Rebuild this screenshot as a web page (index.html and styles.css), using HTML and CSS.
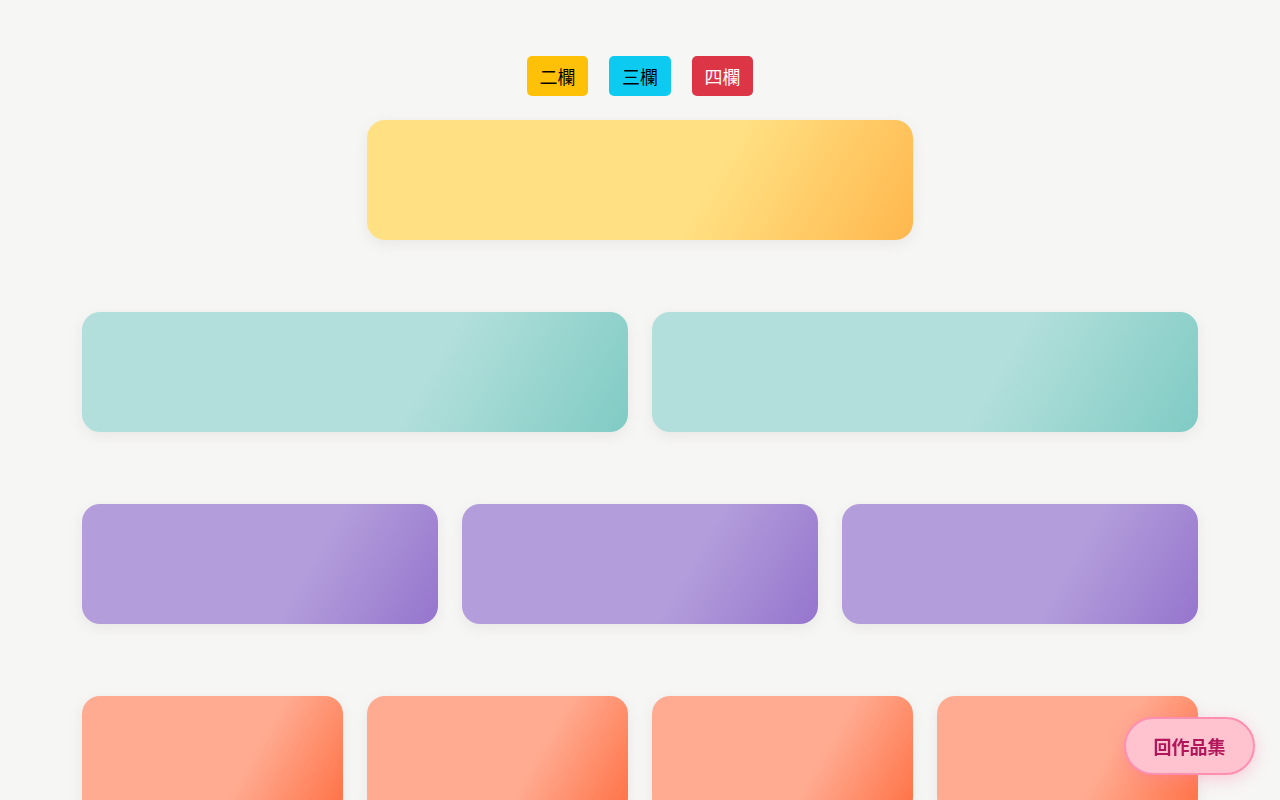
FILE: index.html
```html
<!DOCTYPE html>
<html lang="zh-Hant">
<head>
<meta charset="utf-8">
<title>欄位</title>
<link rel="stylesheet" href="styles.css">
</head>
<body>
<nav class="switcher">
  <button class="btn btn-warning">二欄</button>
  <button class="btn btn-info">三欄</button>
  <button class="btn btn-danger">四欄</button>
</nav>
<main class="wrap">
  <section class="row row-1">
    <div class="card yellow"></div>
  </section>
  <section class="row row-2">
    <div class="card teal"></div>
    <div class="card teal"></div>
  </section>
  <section class="row row-3">
    <div class="card purple"></div>
    <div class="card purple"></div>
    <div class="card purple"></div>
  </section>
  <section class="row row-4">
    <div class="card orange"></div>
    <div class="card orange"></div>
    <div class="card orange"></div>
    <div class="card orange"></div>
  </section>
</main>
<a class="back" href="#">回作品集</a>
</body>
</html>
```
FILE: styles.css
```css
* { box-sizing: border-box; }
html, body { margin: 0; }
body {
  background: #f6f6f5;
  font-family: "Noto Sans CJK TC", "Noto Sans", sans-serif;
  min-height: 100vh;
}
.switcher {
  display: flex;
  justify-content: center;
  gap: 21px;
  padding-top: 56px;
}
.btn {
  font-family: "Noto Sans CJK TC", sans-serif;
  font-size: 18px;
  line-height: 40px;
  height: 40px;
  width: 61px;
  padding: 0;
  text-align: center;
  border: 0;
  border-radius: 5px;
}
.btn-info { width: 62px; }
.btn-warning { background: #ffc107; color: #000; }
.btn-info { background: #0dcaf0; color: #000; }
.btn-danger { background: #dc3545; color: #fff; }
.wrap {
  width: 1116px;
  margin: 24px auto 0;
  display: flex;
  flex-direction: column;
  gap: 72px;
}
.row {
  display: grid;
  gap: 24px;
}
.row-1 { grid-template-columns: 546px; justify-content: center; }
.row-2 { grid-template-columns: repeat(2, 1fr); }
.row-3 { grid-template-columns: repeat(3, 1fr); }
.row-4 { grid-template-columns: repeat(4, 1fr); }
.card {
  height: 120px;
  border-radius: 18px;
  box-shadow: 0 4px 14px rgba(120, 110, 90, 0.10);
}
.yellow { background: linear-gradient(120deg, #ffe082 0%, #ffe082 62%, #ffb74d 100%); }
.teal { background: linear-gradient(120deg, #b2dfdb 0%, #b2dfdb 62%, #80cbc4 100%); }
.purple { background: linear-gradient(120deg, #b39ddb 0%, #b39ddb 62%, #9575cd 100%); }
.orange { background: linear-gradient(120deg, #ffab91 0%, #ffab91 62%, #ff7043 100%); }
.back {
  position: fixed;
  right: 25px;
  bottom: 25px;
  width: 131px;
  height: 58px;
  display: flex;
  align-items: center;
  justify-content: center;
  background: #ffc2cf;
  border: 2px solid #ff8fb0;
  border-radius: 30px;
  color: #b3155a;
  font-size: 18px;
  font-weight: 700;
  text-decoration: none;
  box-shadow: 0 4px 16px rgba(255, 120, 160, 0.35);
}
```
